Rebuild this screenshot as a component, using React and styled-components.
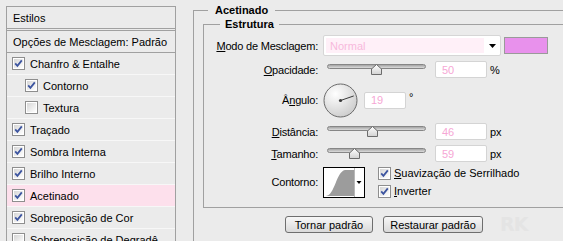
import React from 'react';
import styled, { createGlobalStyle } from 'styled-components';

const GlobalStyle = createGlobalStyle`
    html, body {
        margin: 0;
        padding: 0;
        background: #ebebeb;
        overflow: hidden;
    }
    body {
        font-family: "Liberation Sans", Arial, sans-serif;
        font-size: 11px;
        color: #000;
    }
`;

const Page = styled.div`
    display: flex;
    align-items: flex-start;
    width: 563px;
    height: 241px;
    overflow: hidden;
`;

const StylesPanel = styled.div`
    flex-shrink: 0;
    box-sizing: border-box;
    width: 170px;
    margin: 6px 0 0 6px;
    border: 1px solid #a0a0a0;
`;

const PanelHeader = styled.div`
    height: 21px;
    display: flex;
    align-items: center;
    padding-left: 6px;
    border-bottom: 3px double #a0a0a0;
`;

const BlendRow = styled.div`
    height: 21px;
    display: flex;
    align-items: center;
    padding-left: 6px;
    border-bottom: 1px solid #a0a0a0;
`;

const StyleRow = styled.div`
    height: 21px;
    display: flex;
    align-items: center;
    gap: 5px;
    padding-left: ${p => (p.$nested ? 18 : 5)}px;
    border-bottom: 1px solid #f7f7f7;
    background: ${p => (p.$active ? '#fde0ec' : 'transparent')};
    white-space: nowrap;
`;

const Settings = styled.fieldset`
    flex: 1;
    min-width: 0;
    margin: 4px 0 0 17px;
    padding: 0;
    border: none;
    border-top: 1px solid #a0a0a0;
    border-left: 1px solid #a0a0a0;
    height: 260px;
`;

const Title = styled.legend`
    margin-left: ${p => p.$indent}px;
    padding: 0 ${p => p.$pad}px;
    font-weight: bold;
    line-height: 13px;
`;

const Group = styled.fieldset`
    min-width: 0;
    margin: 1px 0 0 9px;
    padding: 2px 0 6px 0;
    border: none;
    border-top: 1px solid #a0a0a0;
    border-left: 1px solid #a0a0a0;
    border-bottom: 1px solid #a0a0a0;
`;

const Row = styled.div`
    height: ${p => p.$h}px;
    display: flex;
    align-items: center;
`;

const Label = styled.div`
    flex-shrink: 0;
    width: 114px;
    margin-right: 5px;
    text-align: right;
    white-space: nowrap;
    letter-spacing: -0.2px;
`;

const Key = styled.span`
    text-decoration: underline;
`;

const Select = styled.div`
    box-sizing: border-box;
    width: 178px;
    height: 21px;
    display: flex;
    border: 1px solid #d6d6d6;
    border-radius: 2px;
    background: #fff;
`;

const SelectValue = styled.div`
    flex: 1;
    margin: 2px 0 2px 2px;
    padding-left: 4px;
    display: flex;
    align-items: center;
    background: #fff0f8;
    color: #f7b9dc;
`;

const SelectArrow = styled.div`
    width: 16px;
    display: flex;
    align-items: center;
    justify-content: center;
`;

const Swatch = styled.div`
    box-sizing: border-box;
    width: 44px;
    height: 17px;
    margin-left: 3px;
    border: 1px solid #9a9a9a;
    background: #e891ec;
`;

const SliderBox = styled.div`
    position: relative;
    width: 99px;
    height: 11px;
    margin: 0 9px 0 4px;
    align-self: center;
`;

const Track = styled.div`
    box-sizing: border-box;
    height: 5px;
    border: 1px solid #868686;
    border-radius: 3px;
    background: linear-gradient(#a4a4a4, #dcdcdc);
`;

const Thumb = styled.svg`
    position: absolute;
    top: 0;
`;

const NumberField = styled.div`
    box-sizing: border-box;
    width: ${p => p.$w}px;
    height: 17px;
    display: flex;
    align-items: center;
    padding-left: 6px;
    border: 1px solid #d4d4d4;
    border-radius: 2px;
    background: #fff;
    color: #f6a7d5;
`;

const Unit = styled.span`
    margin-left: 3px;
    align-self: ${p => (p.$raised ? 'flex-start' : 'center')};
    margin-top: ${p => (p.$raised ? 10 : 0)}px;
`;

const Dial = styled.svg`
    flex-shrink: 0;
    margin-right: 6px;
`;

const ContourBox = styled.svg`
    flex-shrink: 0;
`;

const Checks = styled.div`
    display: flex;
    flex-direction: column;
    margin-left: 13px;
`;

const CheckLine = styled.div`
    height: 18px;
    display: flex;
    align-items: center;
    gap: 3px;
    white-space: nowrap;
`;

const Buttons = styled.div`
    display: flex;
    align-items: center;
    gap: 10px;
    margin: 8px 0 0 91px;
`;

const Button = styled.div`
    box-sizing: border-box;
    width: ${p => p.$w}px;
    height: 17px;
    display: flex;
    align-items: center;
    justify-content: center;
    border: 1px solid #6e6e6e;
    border-radius: 3px;
    background: linear-gradient(#f7f7f7, #d9d9d9);
`;

const Mark = styled.span`
    margin-left: 7px;
    font-family: "DejaVu Sans", sans-serif;
    font-weight: bold;
    font-size: 19px;
    line-height: 17px;
    letter-spacing: -1px;
    color: #e4e4e4;
`;

function CheckBox({ checked }) {
    return (
        <svg width="13" height="13" viewBox="0 0 13 13" style={{ flexShrink: 0 }}>
            <defs>
                <linearGradient id="cbFill" x1="0" y1="0" x2="1" y2="1">
                    <stop offset="0" stopColor="#d6d6d6" />
                    <stop offset="1" stopColor="#ffffff" />
                </linearGradient>
            </defs>
            <rect x="0.5" y="0.5" width="12" height="12" fill="#fff" stroke="#8e8e8e" />
            <rect x="2" y="2" width="9" height="9" fill="url(#cbFill)" />
            {checked && (
                <path d="M3.2 6.4 L5.4 8.8 L9.8 3.4" fill="none" stroke="#3d55a0" strokeWidth="1.8" />
            )}
        </svg>
    );
}

function Slider({ pos }) {
    return (
        <SliderBox>
            <Track />
            <Thumb width="11" height="11" viewBox="0 0 11 11" style={{ left: pos * 99 - 5.5 }}>
                <defs>
                    <linearGradient id="thumbFill" x1="0" y1="0" x2="0" y2="1">
                        <stop offset="0" stopColor="#ffffff" />
                        <stop offset="1" stopColor="#d2d2d2" />
                    </linearGradient>
                </defs>
                <path d="M5.5 0.5 L10.5 5 L10.5 10.5 L0.5 10.5 L0.5 5 Z" fill="url(#thumbFill)" stroke="#6c6c6c" />
            </Thumb>
        </SliderBox>
    );
}

const styleItems = [
    { name: 'Chanfro & Entalhe', checked: true },
    { name: 'Contorno', checked: true, nested: true },
    { name: 'Textura', checked: false, nested: true },
    { name: 'Traçado', checked: true },
    { name: 'Sombra Interna', checked: true },
    { name: 'Brilho Interno', checked: true },
    { name: 'Acetinado', checked: true, active: true },
    { name: 'Sobreposição de Cor', checked: true },
    { name: 'Sobreposição de Degradê', checked: false },
];

export default function App() {
    const angle = (19 * Math.PI) / 180;
    return (
        <>
            <GlobalStyle />
            <Page>
                <StylesPanel>
                    <PanelHeader>Estilos</PanelHeader>
                    <BlendRow>Opções de Mesclagem: Padrão</BlendRow>
                    {styleItems.map(item => (
                        <StyleRow key={item.name} $nested={item.nested} $active={item.active}>
                            <CheckBox checked={item.checked} />
                            {item.name}
                        </StyleRow>
                    ))}
                </StylesPanel>

                <Settings>
                    <Title $indent={14} $pad={7}>Acetinado</Title>
                    <Group>
                        <Title $indent={16} $pad={5}>Estrutura</Title>

                        <Row $h={25}>
                            <Label><Key>M</Key>odo de Mesclagem:</Label>
                            <Select>
                                <SelectValue>Normal</SelectValue>
                                <SelectArrow>
                                    <svg width="7" height="4" viewBox="0 0 7 4">
                                        <path d="M0 0 H7 L3.5 4 Z" fill="#000" />
                                    </svg>
                                </SelectArrow>
                            </Select>
                            <Swatch />
                        </Row>

                        <Row $h={23}>
                            <Label><Key>O</Key>pacidade:</Label>
                            <Slider pos={0.5} />
                            <NumberField $w={52}>50</NumberField>
                            <Unit>%</Unit>
                        </Row>

                        <Row $h={38}>
                            <Label>Â<Key>n</Key>gulo:</Label>
                            <Dial width="35" height="35" viewBox="0 0 35 35">
                                <defs>
                                    <radialGradient id="dialFill" cx="0.35" cy="0.3" r="0.8">
                                        <stop offset="0" stopColor="#ffffff" />
                                        <stop offset="1" stopColor="#c9c9c9" />
                                    </radialGradient>
                                </defs>
                                <circle cx="17.5" cy="17.5" r="16.5" fill="url(#dialFill)" stroke="#6a6a6a" />
                                <line
                                    x1="17.5"
                                    y1="17.5"
                                    x2={17.5 + 14 * Math.cos(angle)}
                                    y2={17.5 - 14 * Math.sin(angle)}
                                    stroke="#3a3a3a"
                                />
                                <circle cx="17.5" cy="17.5" r="1.6" fill="#3a3a3a" />
                            </Dial>
                            <NumberField $w={42}>19</NumberField>
                            <Unit $raised>°</Unit>
                        </Row>

                        <Row $h={25}>
                            <Label><Key>D</Key>istância:</Label>
                            <Slider pos={0.455} />
                            <NumberField $w={52}>46</NumberField>
                            <Unit>px</Unit>
                        </Row>

                        <Row $h={19}>
                            <Label><Key>T</Key>amanho:</Label>
                            <Slider pos={0.28} />
                            <NumberField $w={52}>59</NumberField>
                            <Unit>px</Unit>
                        </Row>

                        <Row $h={38}>
                            <Label>Contorno:</Label>
                            <ContourBox width="42" height="31" viewBox="0 0 42 31">
                                <rect x="0.5" y="0.5" width="41" height="30" fill="#fff" stroke="#000" />
                                <path d="M3 29 C12 28 13 5 22 3 L31 3 L31 29 Z" fill="#9c9c9c" />
                                <line x1="31.5" y1="1" x2="31.5" y2="30" stroke="#b8b8b8" />
                                <path d="M33.5 14 H38.5 L36 17 Z" fill="#000" />
                            </ContourBox>
                            <Checks>
                                <CheckLine>
                                    <CheckBox checked />
                                    <span><Key>S</Key>uavização de Serrilhado</span>
                                </CheckLine>
                                <CheckLine>
                                    <CheckBox checked />
                                    <span><Key>I</Key>nverter</span>
                                </CheckLine>
                            </Checks>
                        </Row>
                    </Group>

                    <Buttons>
                        <Button $w={88}>Tornar padrão</Button>
                        <Button $w={100}>Restaurar padrão</Button>
                        <Mark>RK</Mark>
                    </Buttons>
                </Settings>
            </Page>
        </>
    );
}
